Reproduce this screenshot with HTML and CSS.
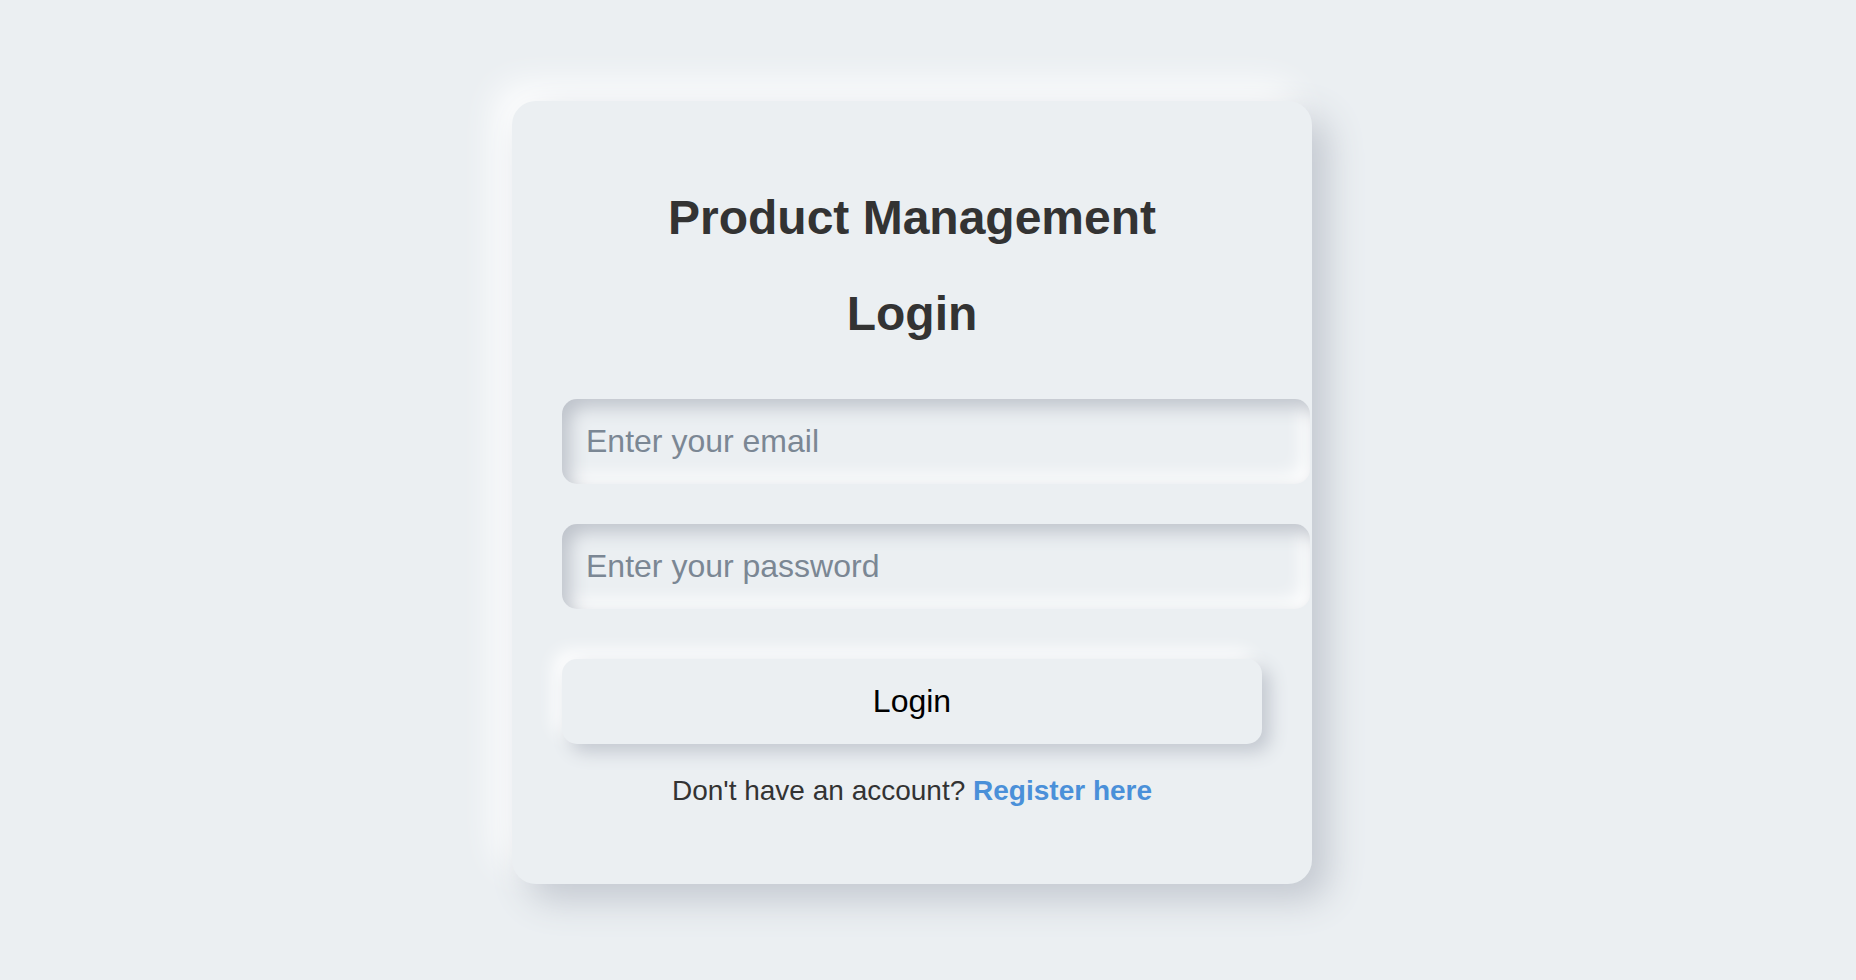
FILE: index.html
```html
<!DOCTYPE html>
<html lang="en">
<head>
<meta charset="utf-8">
<title>Product Management Login</title>
<link rel="stylesheet" href="styles.css">
</head>
<body>
<main class="page">
  <section class="card">
    <h2 class="title">Product Management</h2>
    <h2 class="subtitle">Login</h2>
    <form class="form">
      <input class="field" type="email" placeholder="Enter your email">
      <input class="field" type="password" placeholder="Enter your password">
      <button class="btn" type="button">Login</button>
    </form>
    <p class="note">Don't have an account? <a class="link" href="#">Register here</a></p>
  </section>
</main>
</body>
</html>
```

FILE: styles.css
```css
html, body {
  margin: 0;
  padding: 0;
}

body {
  background: #ebeff2;
  font-family: "Liberation Sans", Helvetica, Arial, sans-serif;
  color: #333333;
}

.page {
  min-height: 980px;
  display: flex;
  align-items: center;
  justify-content: center;
  padding: 5px 32px 0 0;
  box-sizing: border-box;
}

.card {
  width: 700px;
  padding: 50px;
  background: #ebeff2;
  border-radius: 24px;
  box-shadow: 16px 16px 36px #c3c8d0, -16px -16px 36px #ffffff;
  text-align: center;
}

.title,
.subtitle {
  font-size: 48px;
  line-height: 55px;
  font-weight: bold;
  color: #333333;
  margin: 0;
}

.title {
  margin-top: 39px;
}

.subtitle {
  margin-top: 41px;
}

.form {
  margin-top: 58px;
  display: flex;
  flex-direction: column;
  align-items: flex-start;
}

.field {
  box-sizing: content-box;
  width: 100%;
  height: 37px;
  padding: 24px;
  margin: 0 0 40px 0;
  border: none;
  outline: none;
  border-radius: 15px;
  background: #ebeff2;
  font-family: "Liberation Sans", Helvetica, Arial, sans-serif;
  font-size: 32px;
  line-height: 37px;
  color: #333333;
  box-shadow: inset 8px 8px 18px #bec3cb, inset -8px -8px 18px #ffffff;
}

.field::placeholder {
  color: #7b8794;
}

.field + .field {
  margin-bottom: 50px;
}

.btn {
  width: 100%;
  height: 85px;
  border: none;
  border-radius: 15px;
  background: #ebeff2;
  font-family: "Liberation Sans", Helvetica, Arial, sans-serif;
  font-size: 32px;
  color: #000000;
  box-shadow: 8px 8px 18px #c3c8d0, -8px -8px 18px #ffffff;
  cursor: pointer;
}

.note {
  margin: 30px 0 27px;
  font-size: 28px;
  line-height: 33px;
  color: #333333;
}

.link {
  color: #4a90d9;
  font-weight: bold;
  text-decoration: none;
}
```
